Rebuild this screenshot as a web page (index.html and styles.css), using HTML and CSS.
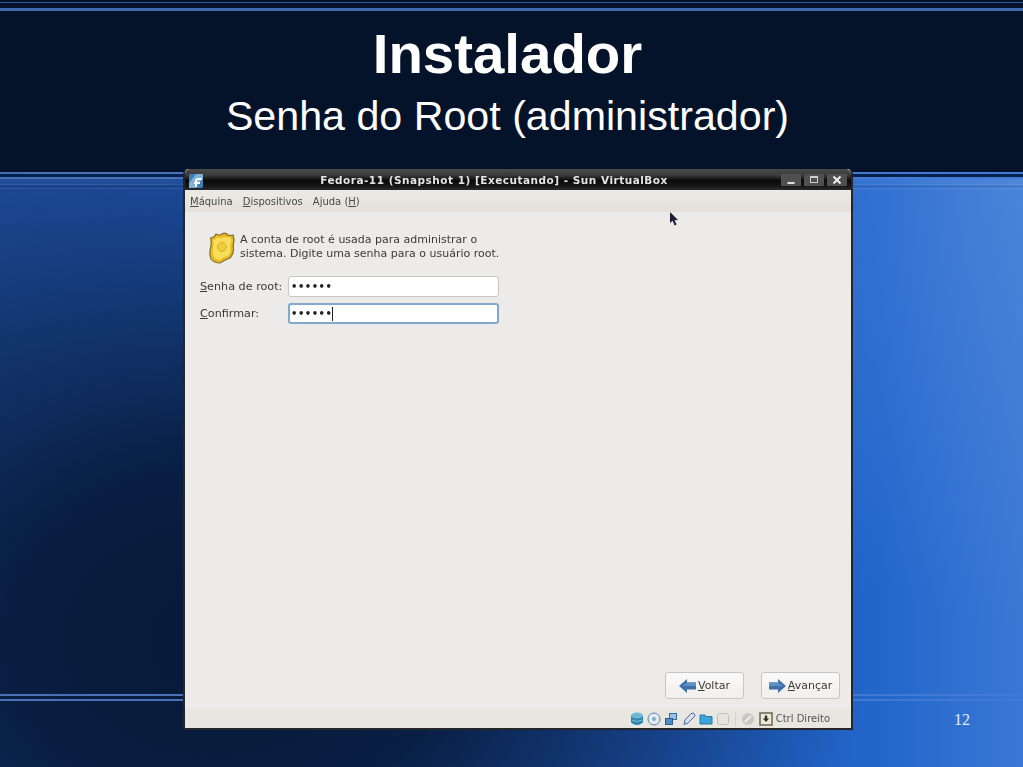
FILE: index.html
```html
<!DOCTYPE html>
<html lang="pt-BR">
<head>
    <meta charset="UTF-8">
    <title>Instalador</title>
    <link rel="stylesheet" href="styles.css">
</head>
<body>
<div class="slide">

    <!-- Slide header -->
    <header class="slide-head">
        <h1>Instalador</h1>
        <h2>Senha do Root (administrador)</h2>
    </header>

    <div class="band">
        <div class="band-line"></div>
        <div class="band-gap"></div>
        <div class="band-line"></div>
        <div class="band-bright"></div>
        <div class="band-thin"></div>
        <div class="band-dim"></div>
        <div class="band-thin"></div>
    </div>

    <div class="foot-lines">
        <div class="band-line"></div>
        <div class="band-line"></div>
    </div>
    <div class="page-num">12</div>

    <!-- VirtualBox window -->
    <div class="vbox">
        <div class="titlebar">
            <svg class="app-icon" width="14" height="14" viewBox="0 0 14 14">
                <rect x="0" y="0" width="14" height="14" rx="2" fill="#3f7fb8"/>
                <path d="M0 9 L7 0 L14 0 L14 4 L6 14 L0 14 Z" fill="#7fb2d8"/>
                <path d="M7 13 V7 Q7 5 10 5 H13 M5 9 H11" stroke="#fff" stroke-width="2" fill="none"/>
            </svg>
            <div class="title-text">Fedora-11 (Snapshot 1) [Executando] - Sun VirtualBox</div>
            <div class="win-btns">
                <div class="win-btn"><svg width="10" height="10" viewBox="0 0 10 10"><rect x="1.500" y="7" width="7" height="2" fill="#ddd"/></svg></div>
                <div class="win-btn"><svg width="10" height="10" viewBox="0 0 10 10"><rect x="1.500" y="1.500" width="7" height="6" fill="none" stroke="#ccc" stroke-width="1"/><rect x="1" y="1" width="8" height="2" fill="#ccc"/></svg></div>
                <div class="win-btn"><svg width="10" height="10" viewBox="0 0 10 10"><path d="M1.500 1.500 L8.500 8.500 M8.500 1.500 L1.500 8.500" stroke="#eee" stroke-width="2"/></svg></div>
            </div>
        </div>

        <div class="menubar">
            <span><u>M</u>áquina</span>
            <span><u>D</u>ispositivos</span>
            <span>Ajuda (<u>H</u>)</span>
        </div>

        <div class="guest">
            <svg class="cursor" width="11" height="16" viewBox="0 0 11 16">
                <path d="M1 0 L1 11 L3.600 8.800 L5.600 13.500 L7.600 12.600 L5.600 8.200 L9 8 Z" fill="#20203a"/>
            </svg>

            <div class="intro">
                <svg width="26" height="32" viewBox="0 0 26 32">
                    <path d="M7 2 Q10 4 13 2 Q16 0 19 3 Q22 4 24 3 Q26 9 24 13 Q26 20 21 26 Q16 28 11 31 Q5 31 2 27 Q0 22 1.500 16 Q3 10 1.500 6 Q5 6 7 2 Z" fill="#e8b820" stroke="#80702e" stroke-width="1.200"/>
                    <path d="M8 5 Q12 7 15 5 Q18 5 22 6 Q23 10 21 14 Q23 20 19 24 Q14 25 11 28 Q7 28 5 25 Q3 21 4 16 Q5 12 4 8 Q7 8 8 5 Z" fill="#f8de58"/>
                    <circle cx="13" cy="15" r="4.500" fill="#f0cc3c" stroke="#dcb030" stroke-width="1"/>
                </svg>
                <p>A conta de root é usada para administrar o<br>sistema. Digite uma senha para o usuário root.</p>
            </div>

            <div class="form-grid">
                <label><u>S</u>enha de root:</label>
                <div class="field">••••••</div>
                <label><u>C</u>onfirmar:</label>
                <div class="field focus">••••••<span class="caret"></span></div>
            </div>

            <div class="spacer"></div>

            <div class="nav-btns">
                <div class="btn">
                    <svg width="17" height="16" viewBox="0 0 17 16"><path d="M0 8 L8 1 V4.500 H17 V11.500 H8 V15 Z" fill="#3f70a8"/><path d="M8 4.500 H17 V8 H3 Z" fill="#5f90c4"/></svg>
                    <span><u>V</u>oltar</span>
                </div>
                <div class="btn">
                    <svg width="17" height="16" viewBox="0 0 17 16"><path d="M17 8 L9 1 V4.500 H0 V11.500 H9 V15 Z" fill="#3f70a8"/><path d="M9 4.500 H0 V8 H14 Z" fill="#5f90c4"/></svg>
                    <span><u>A</u>vançar</span>
                </div>
            </div>
        </div>

        <div class="statusbar">
            <svg width="14" height="14" viewBox="0 0 14 14"><path d="M1 3.500 V10.500 Q7 15.500 13 10.500 V3.500 Z" fill="#2f86ae"/><ellipse cx="7" cy="3.500" rx="6" ry="3" fill="#6fb8d8"/><path d="M2 8 Q7 11 12 8" stroke="#7fc4e0" fill="none"/></svg>
            <svg width="14" height="14" viewBox="0 0 14 14"><circle cx="7" cy="7" r="6" fill="#e4eaf2" stroke="#5a84a8"/><circle cx="7" cy="7" r="2" fill="#88a8c8"/></svg>
            <svg width="14" height="14" viewBox="0 0 14 14"><rect x="5.500" y="1.500" width="7" height="6" fill="#9cc0e4" stroke="#3a6a9a"/><rect x="1.500" y="6.500" width="7" height="6" fill="#4f8cc8" stroke="#2f5a8a"/></svg>
            <svg width="14" height="14" viewBox="0 0 14 14"><path d="M2 12.500 L3 8 L9 1.500 Q11 0.500 12.500 2 Q13.500 4 12 5 L6 11 Z" fill="#d8e0f0" stroke="#4a6a9a"/></svg>
            <svg width="14" height="14" viewBox="0 0 14 14"><path d="M1 3 H6 L7 4.500 H13 V12 H1 Z" fill="#3aa4dc" stroke="#2a78a8"/></svg>
            <svg width="14" height="14" viewBox="0 0 14 14"><rect x="1.500" y="1.500" width="11" height="11" rx="2" fill="#e6e4df" stroke="#c0bfba"/></svg>
            <div class="status-sep"></div>
            <svg width="14" height="14" viewBox="0 0 14 14"><circle cx="7" cy="7" r="6" fill="#c8c8c4"/><path d="M4 10 L10 4" stroke="#eee" stroke-width="2"/></svg>
            <svg width="14" height="14" viewBox="0 0 14 14"><rect x="1" y="1" width="12" height="12" fill="#efe9d8" stroke="#6a654a" stroke-width="1.500"/><path d="M7 10 L3.800 6.500 H5.800 V3.500 H8.200 V6.500 H10.200 Z" fill="#333"/></svg>
            <span class="host-key">Ctrl Direito</span>
        </div>
    </div>
</div>
</body>
</html>
```

FILE: styles.css
```css
* {
    margin: 0;
    padding: 0;
    box-sizing: border-box;
}

html, body {
    width: 1023px;
    height: 767px;
    overflow: hidden;
    background: #04132a;
}

/* Slide */
.slide {
    position: relative;
    width: 1023px;
    height: 767px;
    display: flex;
    flex-direction: column;
    font-family: "Liberation Sans", Arial, sans-serif;
    color: #fff;
    background:
        radial-gradient(ellipse 640px 500px at 230px 640px, rgba(5, 22, 50, 0.97) 0%, rgba(5, 22, 50, 0.85) 35%, rgba(5, 22, 50, 0) 100%),
        radial-gradient(ellipse 340px 460px at 1023px 170px, rgba(100, 150, 225, 0.4), rgba(100, 150, 225, 0) 100%),
        linear-gradient(to right, #1c4a96 0%, #2058b8 50%, #2266cc 86%, #3a78d4 100%);
}

.slide-head {
    height: 172px;
    padding-top: 2px;
    background: #04132a;
    text-align: center;
}

.slide-head::before {
    content: "";
    display: block;
    height: 5px;
    border-top: 1px solid #2f5aa0;
    border-bottom: 3px solid #3e68ac;
}

.slide-head h1 {
    font-size: 56.400px;
    line-height: 62px;
    font-weight: bold;
    margin-top: 12px;
    padding-right: 8px;
}

.slide-head h2 {
    font-size: 41.200px;
    line-height: 46px;
    font-weight: normal;
    margin-top: 8px;
    padding-right: 8px;
}

.band-line {
    height: 2px;
    background: linear-gradient(to right, #4a6fb4, #4a74c4 50%, #3f7ad8);
}

.band-gap {
    height: 3px;
    background: #04214e;
}

.band-bright {
    height: 5px;
    background: rgba(255, 255, 255, 0.03);
}

.band-thin {
    height: 1px;
    background: rgba(255, 255, 255, 0.1);
}

.band-dim {
    height: 3px;
    background: rgba(0, 0, 0, 0.06);
}

.foot-lines {
    position: absolute;
    left: 0;
    right: 0;
    top: 694px;
    height: 7px;
    display: flex;
    flex-direction: column;
    justify-content: space-between;
}

.page-num {
    position: absolute;
    left: 954px;
    top: 711px;
    font-family: "Liberation Serif", serif;
    font-size: 16px;
    line-height: 18px;
    color: #e6ecf6;
}

/* VirtualBox window */
.vbox {
    position: absolute;
    left: 183px;
    top: 169px;
    width: 670px;
    height: 561px;
    display: flex;
    flex-direction: column;
    background: #edebe9;
    border: 2px solid #24262a;
    border-top: 0;
    border-radius: 5px 5px 0 0;
    font-family: "DejaVu Sans", sans-serif;
    font-size: 11px;
    color: #3a3a38;
    filter: blur(0.35px);
}

.titlebar {
    height: 21px;
    display: flex;
    align-items: center;
    padding: 0 4px;
    border-radius: 5px 5px 0 0;
    background: linear-gradient(to bottom, #4a4a4a 0%, #3a3a3a 30%, #0a0a0a 55%, #161616 80%, #2a2a2a 100%);
}

.app-icon {
    flex: none;
    margin-top: 2px;
}

.title-text {
    flex: 1;
    text-align: center;
    margin-left: 4px;
    font-size: 10.500px;
    font-weight: bold;
    letter-spacing: 0.500px;
    color: #e4e4e4;
}

.win-btns {
    display: flex;
    gap: 3px;
}

.win-btn {
    width: 20px;
    height: 12px;
    display: flex;
    align-items: center;
    justify-content: center;
    background: #505050;
    border-radius: 1px;
}

.menubar {
    height: 22px;
    display: flex;
    align-items: center;
    gap: 10px;
    padding: 0 5px;
    background: linear-gradient(to bottom, #ebeae4, #e2e0d9);
    font-size: 10px;
    color: #4a4a48;
}

.guest {
    flex: 1;
    position: relative;
    display: flex;
    flex-direction: column;
    padding: 20px 11px 10px 15px;
}

.cursor {
    position: absolute;
    left: 484px;
    top: 0;
}

.intro {
    display: flex;
    align-items: center;
    gap: 5px;
    margin-left: 9px;
}

.intro p {
    line-height: 14px;
    padding-bottom: 2px;
}

.form-grid {
    display: grid;
    grid-template-columns: 88px 211px;
    grid-auto-rows: 21px;
    row-gap: 6px;
    align-items: center;
    margin-top: 12px;
    font-size: 11.200px;
}

.field {
    height: 21px;
    display: flex;
    align-items: center;
    padding-left: 2px;
    background: #fff;
    border: 1px solid #c8c6c2;
    border-radius: 3px;
    color: #222;
    font-size: 10px;
    font-weight: bold;
    letter-spacing: 0.500px;
}

.field.focus {
    border: 2px solid #7fa8cc;
    padding-left: 1px;
}

.caret {
    width: 1px;
    height: 14px;
    background: #222;
}

.spacer {
    flex: 1;
}

.nav-btns {
    display: flex;
    justify-content: flex-end;
    gap: 17px;
}

.btn {
    width: 79px;
    height: 27px;
    display: flex;
    align-items: center;
    justify-content: center;
    gap: 2px;
    background: linear-gradient(to bottom, #fbfafa, #f0efed);
    border: 1px solid #c8c6c0;
    border-radius: 3px;
}

.statusbar {
    height: 19px;
    display: flex;
    align-items: center;
    justify-content: flex-end;
    gap: 3.200px;
    padding-right: 21px;
    background: #e8e6e0;
    font-size: 10px;
    color: #555;
}

.status-sep {
    width: 1px;
    height: 14px;
    margin: 0 2px;
    background: #d4d2cc;
}

svg {
    flex: none;
}
```
